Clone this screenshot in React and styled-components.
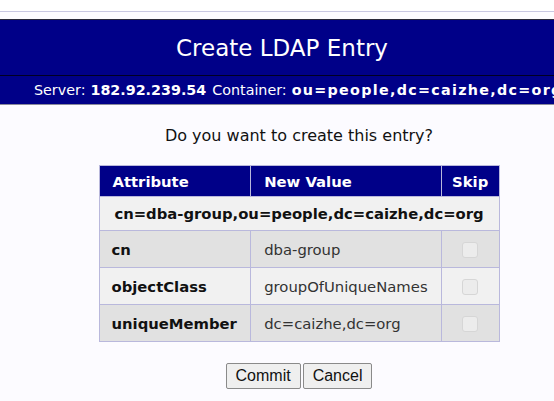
import React from 'react'
import styled, { createGlobalStyle } from 'styled-components'

const GlobalStyle = createGlobalStyle`
    html, body {
        margin: 0;
        padding: 0;
        background: #fcfbff;
        font-family: "DejaVu Sans", Verdana, sans-serif;
    }
`

const Page = styled.div`
    width: 554px;
    height: 401px;
    overflow: hidden;
`

const TopStrip = styled.div`
    height: 11px;
    background: #ffffff;
    border-bottom: 1px solid #c9c8e2;
`

const Gap = styled.div`
    height: 7px;
    background: #fdfcff;
    border-bottom: 1px solid #2a2a3a;
`

const TitleBar = styled.div`
    background: #000088;
    color: #fff;
    height: 55px;
    display: flex;
    align-items: center;
    justify-content: center;
    padding-left: 10px;
    font-size: 23px;
    border-bottom: 1px solid #000022;
`

const InfoBar = styled.div`
    background: #000088;
    color: #fff;
    height: 28px;
    display: flex;
    align-items: center;
    padding-left: 34px;
    font-size: 14.3px;
    white-space: nowrap;
    overflow: hidden;
    border-bottom: 1px solid #8a8a9a;
`

const InfoValue = styled.b`
    font-weight: bold;
    margin-left: 5px;
    margin-right: ${({ last }) => (last ? '0' : '6px')};
    letter-spacing: ${({ wide }) => (wide ? '1.3px' : '0')};
`

const Main = styled.div`
    display: flex;
    flex-direction: column;
    align-items: center;
    padding-left: 44px;
`

const Question = styled.p`
    margin: 21px 0 20px;
    font-size: 16px;
    color: #111;
`

const Table = styled.table`
    border-collapse: collapse;
    width: 401px;
    border: 1px solid #b9b8dc;
    font-size: 14.8px;

    td, th {
        padding: 0;
        border: 1px solid #b9b8dc;
    }
`

const Th = styled.th`
    background: #000088;
    color: #fff;
    font-weight: 600;
    text-align: ${({ center }) => (center ? 'center' : 'left')};
    height: 30px;
    && { padding-left: ${({ center }) => (center ? '0' : '13px')}; }
`

const DnCell = styled.td`
    background: #f1f1f1;
    text-align: center;
    font-weight: bold;
    height: 33px;
    color: #111;
`

const AttrCell = styled.td`
    background: ${({ alt }) => (alt ? '#f1f1f1' : '#e1e1e1')};
    font-weight: bold;
    height: 36px;
    color: #111;
    && { padding-left: 12px; }
`

const ValueCell = styled.td`
    background: ${({ alt }) => (alt ? '#f1f1f1' : '#e1e1e1')};
    color: #333;
    && { padding-left: 13px; }
`

const SkipCell = styled.td`
    background: ${({ alt }) => (alt ? '#f1f1f1' : '#e1e1e1')};
    text-align: center;
`

const Box = styled.span`
    display: inline-block;
    width: 14px;
    height: 14px;
    border: 1px solid #d6d6d6;
    border-radius: 3px;
    background: #ececec;
    vertical-align: middle;
`

const Buttons = styled.div`
    display: flex;
    gap: 2px;
    margin-top: 21px;
`

const Button = styled.button`
    font-family: "Liberation Sans", Arial, sans-serif;
    font-size: 16px;
    color: #111;
    background: #efefef;
    border: 1px solid #8a8a8a;
    border-radius: 2px;
    height: 26px;
    padding: 0 9px;
`

const rows = [
    { name: 'cn', value: 'dba-group' },
    { name: 'objectClass', value: 'groupOfUniqueNames' },
    { name: 'uniqueMember', value: 'dc=caizhe,dc=org' },
]

const App = () => {
    return (
        <Page>
            <GlobalStyle />
            <TopStrip />
            <Gap />
            <TitleBar>Create LDAP Entry</TitleBar>
            <InfoBar>
                Server:<InfoValue>182.92.239.54</InfoValue>
                Container:<InfoValue wide last>ou=people,dc=caizhe,dc=org</InfoValue>
            </InfoBar>
            <Main>
                <Question>Do you want to create this entry?</Question>
                <Table>
                    <colgroup>
                        <col style={{ width: 152 }} />
                        <col style={{ width: 191 }} />
                        <col style={{ width: 58 }} />
                    </colgroup>
                    <thead>
                        <tr>
                            <Th>Attribute</Th>
                            <Th>New Value</Th>
                            <Th center>Skip</Th>
                        </tr>
                    </thead>
                    <tbody>
                        <tr>
                            <DnCell colSpan={3}>cn=dba-group,ou=people,dc=caizhe,dc=org</DnCell>
                        </tr>
                        {rows.map((r, i) => (
                            <tr key={r.name}>
                                <AttrCell alt={i % 2 === 1}>{r.name}</AttrCell>
                                <ValueCell alt={i % 2 === 1}>{r.value}</ValueCell>
                                <SkipCell alt={i % 2 === 1}><Box /></SkipCell>
                            </tr>
                        ))}
                    </tbody>
                </Table>
                <Buttons>
                    <Button>Commit</Button>
                    <Button>Cancel</Button>
                </Buttons>
            </Main>
        </Page>
    )
}

export default App
